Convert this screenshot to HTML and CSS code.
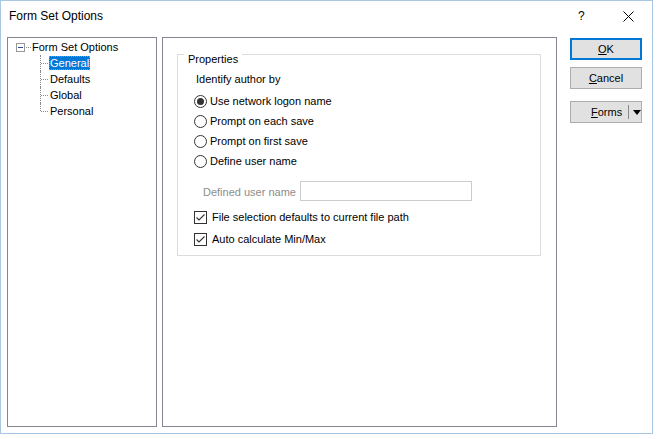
FILE: index.html
```
<!DOCTYPE html>
<html>
<head>
<meta charset="utf-8">
<link rel="stylesheet" href="styles.css">
</head>
<body>
<div class="window">
  <div class="titlebar">
    <span class="title">Form Set Options</span>
    <span class="help">?</span>
    <span class="close"><svg width="11" height="11" viewBox="0 0 11 11"><path d="M0.5 0.5 L10.5 10.5 M10.5 0.5 L0.5 10.5" stroke="#000" stroke-width="1" fill="none"/></svg></span>
  </div>
  <div class="body">
    <div class="tree">
      <div class="tree-row root">
        <span class="expander"><span class="minus"></span></span>
        <span class="root-link"></span>
        <span class="label">Form Set Options</span>
      </div>
      <div class="children">
        <div class="tree-row child"><span class="branch"></span><span class="label selected">General</span></div>
        <div class="tree-row child"><span class="branch"></span><span class="label">Defaults</span></div>
        <div class="tree-row child"><span class="branch"></span><span class="label">Global</span></div>
        <div class="tree-row child"><span class="branch last"></span><span class="label">Personal</span></div>
      </div>
    </div>
    <div class="panel">
      <div class="group">
        <div class="legend">Properties</div>
        <div class="caption">Identify author by</div>
        <div class="radio-row"><span class="radio checked"></span><span>Use network logon name</span></div>
        <div class="radio-row"><span class="radio"></span><span>Prompt on each save</span></div>
        <div class="radio-row"><span class="radio"></span><span>Prompt on first save</span></div>
        <div class="radio-row"><span class="radio"></span><span>Define user name</span></div>
        <div class="field-row"><span class="field-label">Defined user name</span><span class="textbox"></span></div>
        <div class="check-row"><span class="checkbox"><svg width="11" height="11" viewBox="0 0 11 11"><path d="M1.5 5.5 L4 8 L9.5 2.5" stroke="#333" stroke-width="1.1" fill="none"/></svg></span><span>File selection defaults to current file path</span></div>
        <div class="check-row"><span class="checkbox"><svg width="11" height="11" viewBox="0 0 11 11"><path d="M1.5 5.5 L4 8 L9.5 2.5" stroke="#333" stroke-width="1.1" fill="none"/></svg></span><span>Auto calculate Min/Max</span></div>
      </div>
    </div>
    <div class="buttons">
      <div class="btn default"><span><u>O</u>K</span></div>
      <div class="btn"><span><u>C</u>ancel</span></div>
      <div class="btn split"><span class="split-text"><u>F</u>orms</span><span class="sep"></span><span class="arrow"></span></div>
    </div>
  </div>
</div>
</body>
</html>
```
FILE: styles.css
```
html, body {
  margin: 0;
  padding: 0;
  background: #ffffff;
}
body {
  font-family: "Liberation Sans", Arial, sans-serif;
  font-size: 11px;
  color: #000;
}
.window {
  width: 653px;
  height: 434px;
  box-sizing: border-box;
  border: 1px solid #a9c6e2;
  background: #ffffff;
  display: flex;
  flex-direction: column;
}
.titlebar {
  height: 30px;
  display: flex;
  align-items: center;
  flex: none;
}
.title {
  font-size: 12px;
  margin-left: 8px;
  flex: 1;
}
.help {
  font-size: 12px;
  width: 8px;
  margin-right: 37px;
}
.close {
  width: 11px;
  height: 11px;
  margin-right: 18px;
  display: flex;
}
.body {
  display: flex;
  padding: 6px 0 0 6px;
  flex: none;
}
.tree {
  width: 150px;
  height: 390px;
  box-sizing: border-box;
  border: 1px solid #828790;
  padding-top: 1px;
  flex: none;
}
.tree-row {
  height: 16px;
  display: flex;
  align-items: center;
}
.root {
  padding-left: 8px;
}
.expander {
  width: 9px;
  height: 9px;
  box-sizing: border-box;
  border: 1px solid #979797;
  display: flex;
  align-items: center;
  justify-content: center;
  margin-top: 1px;
}
.minus {
  width: 5px;
  height: 1px;
  background: #2a4aa0;
}
.root-link {
  width: 5px;
  margin: 0 1px 0 1px;
  border-top: 1px dotted #8a8a8a;
  align-self: center;
}
.label {
  padding: 0 1px;
  line-height: 14px;
}
.root .label {
  margin-left: -1px;
}
.children {
  margin-left: 32px;
}
.child {
  position: relative;
}
.branch {
  position: relative;
  width: 9px;
  height: 16px;
  flex: none;
}
.branch::before {
  content: "";
  position: absolute;
  left: 0;
  top: 0;
  height: 16px;
  border-left: 1px dotted #8a8a8a;
}
.branch.last::before {
  height: 8px;
}
.branch::after {
  content: "";
  position: absolute;
  left: 1px;
  top: 8px;
  width: 7px;
  border-top: 1px dotted #8a8a8a;
}
.child .label {
  padding: 0 1px;
  margin-left: 0;
}
.selected {
  background: #0078d7;
  color: #ffffff;
  outline: 1px dotted #d9872c;
  outline-offset: -1px;
}
.panel {
  width: 395px;
  height: 390px;
  box-sizing: border-box;
  border: 1px solid #828790;
  margin-left: 5px;
  padding: 16px 15px 0 14px;
  flex: none;
}
.group {
  border: 1px solid #dcdcdc;
  padding: 0 0 5px 0;
}
.legend {
  width: fit-content;
  background: #fff;
  margin: -2px 0 0 6px;
  padding: 0 4px;
  line-height: 13px;
}
.caption {
  margin: 6px 0 0 18px;
  line-height: 14px;
}
.radio-row {
  height: 20px;
  display: flex;
  align-items: center;
  padding-left: 16px;
}
.caption + .radio-row {
  margin-top: 5px;
}
.radio {
  width: 13px;
  height: 13px;
  box-sizing: border-box;
  border: 1px solid #333;
  border-radius: 50%;
  margin-right: 3px;
  display: flex;
  align-items: center;
  justify-content: center;
  flex: none;
}
.radio.checked::after {
  content: "";
  width: 7px;
  height: 7px;
  border-radius: 50%;
  background: #333;
}
.field-row {
  display: flex;
  align-items: center;
  margin-top: 9px;
  padding-left: 25px;
  height: 21px;
}
.field-label {
  color: #8d8d8d;
  width: 97px;
  padding-top: 2px;
}
.textbox {
  width: 172px;
  height: 20px;
  box-sizing: border-box;
  border: 1px solid #cccccc;
}
.check-row {
  height: 22px;
  display: flex;
  align-items: center;
  padding-left: 16px;
}
.field-row + .check-row {
  margin-top: 5px;
}
.checkbox {
  width: 13px;
  height: 13px;
  box-sizing: border-box;
  border: 1px solid #333;
  margin-right: 5px;
  display: flex;
  align-items: center;
  justify-content: center;
  flex: none;
}
.checkbox svg {
  display: block;
}
.buttons {
  margin-left: 13px;
  padding-top: 1px;
  display: flex;
  flex-direction: column;
  width: 72px;
}
.btn {
  height: 22px;
  box-sizing: border-box;
  border: 1px solid #adadad;
  background: #e1e1e1;
  display: flex;
  align-items: center;
  justify-content: center;
  margin-bottom: 7px;
}
.btn.default {
  border: 2px solid #0078d7;
}
.btn.split {
  margin-top: 5px;
  justify-content: flex-start;
}
.split-text {
  margin-left: 20px;
}
.sep {
  width: 1px;
  height: 14px;
  background: #8a8a8a;
  margin-left: 6px;
}
.arrow {
  width: 0;
  height: 0;
  border-left: 4.5px solid transparent;
  border-right: 4.5px solid transparent;
  border-top: 5px solid #000;
  margin-left: 4px;
}
```
